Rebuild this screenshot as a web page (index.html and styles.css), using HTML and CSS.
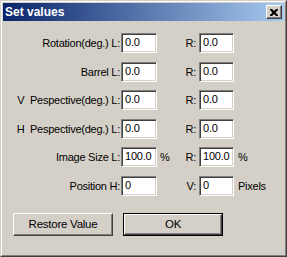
FILE: index.html
```html
<!DOCTYPE html>
<html>
<head>
<meta charset="utf-8">
<link rel="stylesheet" href="styles.css">
</head>
<body>
<div class="window">
  <div class="titlebar">
    <span class="title">Set values</span>
    <span class="close">
      <svg width="8" height="7" viewBox="0 0 8 7"><path d="M0 0h2l2 2 2-2h2v1l-2.5 2.5L8 6v1H6L4 5 2 7H0V6l2.5-2.5L0 1z" fill="#000"/></svg>
    </span>
  </div>
  <div class="content">
    <div class="form">
      <div class="lbl">Rotation(deg.) L:</div><div class="field">0.0</div><div class="unit"></div><div class="lbl2">R:</div><div class="field r">0.0</div><div class="unit2"></div>
      <div class="lbl">Barrel L:</div><div class="field">0.0</div><div class="unit"></div><div class="lbl2">R:</div><div class="field r">0.0</div><div class="unit2"></div>
      <div class="lbl">V&nbsp; Pespective(deg.) L:</div><div class="field">0.0</div><div class="unit"></div><div class="lbl2">R:</div><div class="field r">0.0</div><div class="unit2"></div>
      <div class="lbl">H&nbsp; Pespective(deg.) L:</div><div class="field">0.0</div><div class="unit"></div><div class="lbl2">R:</div><div class="field r">0.0</div><div class="unit2"></div>
      <div class="lbl">Image Size L:</div><div class="field">100.0</div><div class="unit">%</div><div class="lbl2">R:</div><div class="field r">100.0</div><div class="unit2">%</div>
      <div class="lbl">Position H:</div><div class="field">0</div><div class="unit"></div><div class="lbl2">V:</div><div class="field r">0</div><div class="unit2">Pixels</div>
    </div>
    <div class="buttons">
      <div class="btn">Restore Value</div>
      <div class="btn default"><div class="btn-inner">OK</div></div>
    </div>
  </div>
</div>
</body>
</html>
```
FILE: styles.css
```css
html, body {
  margin: 0;
  padding: 0;
  background: #d4d0c8;
}
body {
  font-family: "Liberation Sans", Arial, sans-serif;
  font-size: 11px;
  letter-spacing: -0.25px;
  color: #000;
}
.window {
  width: 287px;
  height: 257px;
  box-sizing: border-box;
  background: #d4d0c8;
  border-top: 1px solid #d4d0c8;
  border-left: 1px solid #d4d0c8;
  border-right: 1px solid #404040;
  border-bottom: 1px solid #404040;
  position: relative;
}
.window::before {
  content: "";
  position: absolute;
  inset: 0;
  border-top: 1px solid #fff;
  border-left: 1px solid #fff;
  border-right: 1px solid #808080;
  border-bottom: 1px solid #808080;
  pointer-events: none;
}
.titlebar {
  margin: 2px 2px 0 2px;
  height: 18px;
  background: linear-gradient(to right, #0a246a, #a6caf0);
  display: flex;
  align-items: center;
  justify-content: space-between;
  padding: 0 2px 0 2px;
  box-sizing: border-box;
}
.title {
  color: #fff;
  font-weight: bold;
  font-size: 12px;
  letter-spacing: 0;
  line-height: 18px;
}
.close {
  width: 16px;
  height: 14px;
  box-sizing: border-box;
  background: #d4d0c8;
  border-top: 1px solid #fff;
  border-left: 1px solid #fff;
  border-right: 1px solid #404040;
  border-bottom: 1px solid #404040;
  box-shadow: inset -1px -1px 0 #808080;
  display: flex;
  align-items: center;
  justify-content: center;
  padding-right: 1px;
}
.close svg {
  display: block;
}
.content {
  padding: 12px 0 0 0;
}
.form {
  display: grid;
  grid-template-columns: 120px 36px 25px 17px 35px auto;
  grid-auto-rows: 20px;
  row-gap: 8.5px;
  align-items: center;
}
.lbl {
  text-align: right;
  padding-right: 1px;
  white-space: nowrap;
}
.lbl2 {
  text-align: right;
  padding-right: 3px;
}
.unit {
  padding-left: 3px;
}
.unit2 {
  padding-left: 4px;
}
.field {
  height: 20px;
  box-sizing: border-box;
  background: #fff;
  border-top: 1px solid #808080;
  border-left: 1px solid #808080;
  border-right: 1px solid #fff;
  border-bottom: 1px solid #fff;
  box-shadow: inset 1px 1px 0 #404040, inset -1px -1px 0 #d4d0c8;
  padding: 1px 0 0 3px;
  line-height: 15px;
  font-size: 11px;
  letter-spacing: -0.2px;
}
.buttons {
  display: flex;
  gap: 10px;
  margin-top: 17px;
  padding-left: 12px;
}
.btn {
  width: 100px;
  height: 23px;
  box-sizing: border-box;
  background: #d4d0c8;
  border-top: 1px solid #fff;
  border-left: 1px solid #fff;
  border-right: 1px solid #404040;
  border-bottom: 1px solid #404040;
  box-shadow: inset -1px -1px 0 #808080;
  display: flex;
  align-items: center;
  justify-content: center;
  font-size: 11.5px;
}
.btn.default {
  border: 1px solid #000;
  box-shadow: none;
  padding: 0;
}
.btn-inner {
  width: 100%;
  height: 100%;
  box-sizing: border-box;
  border-top: 1px solid #fff;
  border-left: 1px solid #fff;
  border-right: 1px solid #404040;
  border-bottom: 1px solid #404040;
  box-shadow: inset -1px -1px 0 #808080;
  display: flex;
  align-items: center;
  justify-content: center;
}
```
